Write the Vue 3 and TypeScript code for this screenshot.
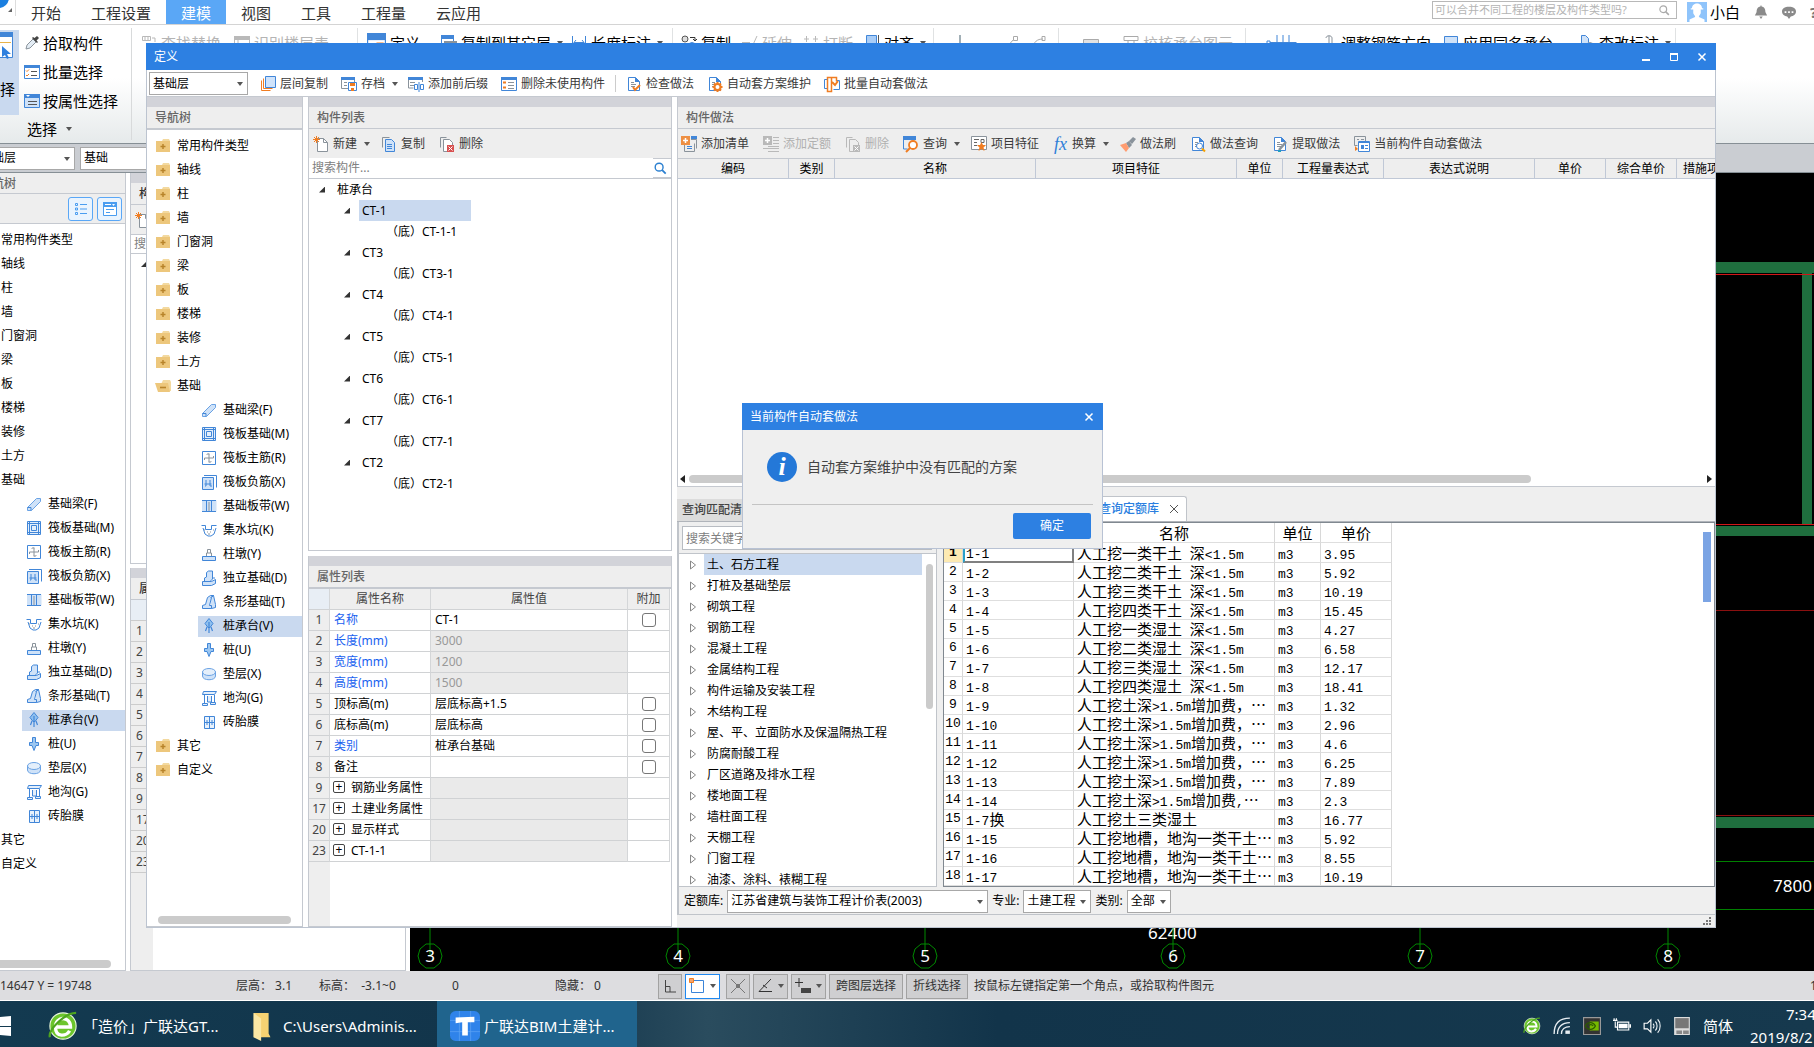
<script setup lang="ts">
import { h, ref } from 'vue'

const B = '#4186d8'
const L = '#cfe2f8'
const O = '#f07d22'
const G = '#8a939b'
const D = '#b9b9b9'

const line = (d: string, c = B, w = 1, f = 'none') =>
  `<path d="${d}" fill="${f}" stroke="${c}" stroke-width="${w}"/>`
const fill = (d: string, c = B) => `<path d="${d}" fill="${c}"/>`

const doc = line('M2.5 1.5h7l4 4v9h-11z', B, 1, '#fff') + fill('M9 1l5 5H9z') + line('M5 6.500h3M5 8.500h5M5 10.500h4', G)

const icons: Record<string, string> = {
  eyedrop: line('M2 14l1-4 6-6 3 3-6 6z', G, 1, '#e4edf5') + fill('M8 3l5 5 1-1-1.500-1.500L15 3 13 1l-2.500 2L9 2z', '#444'),
  batch: line('M.5 1.500h15v13H.5z', B, 1, '#fff') + fill('M0 1h16v3H0z') + line('M2 6.500l1 1 2-2M2 11l1 1 2-2', O) + line('M7 7.500h6M7 11.500h6', '#555'),
  attr: line('M.5 1.500h15v13H.5z', B, 1, L) + fill('M0 1h16v4H0z') + fill('M2 2h4L4 4z', '#fff') + line('M4 8.500h9M4 11.500h9', '#555'),
  find: line('M1.500 1.500h8v4h-8zM6.500 9.500h8v5h-8zM4 1v4M7 1v4M11 3h3v4', D),
  floors: fill('M0 1h16v4H0z', D) + line('M.5 1.500h15v13H.5zM4 5v9M6 8.500h8M6 11.500h8', D),
  define: line('M.5 .5h15v15H.5z', B, 1, '#fff') + fill('M0 0h16v6H0z') + line('M2 9h5M2 12h5', '#555') + fill('M8 8h6v6H8z', O),
  copyLayer: line('M.5 .5h12v9H.5z', B, 1, '#fff') + fill('M0 0h13v4H0z') + fill('M3 6h13v9H3z', G),
  dim: line('M1.500 1v14M14.500 1v14M3 7.500h10M5 5L3 7.500 5 10M11 5l2 2.500-2 2.500'),
  dup: `<circle cx="4" cy="4" r="3" fill="#ddd" stroke="#555"/><circle cx="11" cy="11" r="3.500" fill="${L}" stroke="${B}"/>` + line('M9 2.500h5v3M12 4l2 2 2-2M3 9v4h3', '#333'),
  extend: line('M0 7.500h8', D, 1) + line('M15 1L9 14M1 12h7', D),
  split: line('M1 4h5M3.500 1v6M10 4h5M12.500 1v6M1 12h5M10 12h5', D),
  align: line('M2.500 .5h10v8h-10z', B, 1, '#a9cdf7') + line('M14.500 0v16', '#555') + fill('M0 10h13v4H0z', G),
  vline: line('M8 0v16', '#44606e', 1),
  seg: line('M2 14L11 4', '#aaa') + line('M10.500 1.500h4v4h-4z', '#aaa'),
  arc: line('M3 12C4 7 7 4 13 4', '#aaa') + line('M12 1.500h3v4h-3zM1.500 10.500h3v3h-3z', '#aaa'),
  slab: line('M.5 4.500h15v8H.5z', '#aaa', 1, '#e2e2e2'),
  cap: line('M1 1.500h14v4H1zM5 5v9M11 5v9M3 14.500h10', '#aaa'),
  capB: line('M1.500 1.500h13v7h-13z', B, 1, L) + line('M5 9v5M11 9v5M1 11.500h14'),
  grid: line('M-6 7.500h28M-6 12.500h28M2.500 0v16M8.500 0v16M14.500 0v16') + line('M-7.500 6h3v3h-3z', B, 1, '#fff'),
  rebar: line('M5 3c0-3 6-3 6 0v10M8 1v13M4 9h9M5 12c0 3 6 3 6 0', G),
  edit: line('M2.500 .5h4l3 3v6h-7z', B, 1, L) + `<circle cx="11" cy="11" r="3.500" fill="#fff" stroke="${G}"/>`,
  layerCopy: line('M1.500 4.500v10h9', O) + line('M3.500 2.500v10h9', O) + line('M5.500 .5h10v11h-10z', B, 1, '#cfe3fb'),
  save: line('M.5 1.500h13v11H.5z', G, 1, '#fff') + fill('M0 1h14v3H0z', B) + line('M3 6.500h3M3 9.500h3', G) + line('M7.500 6.500h8v8h-8z', B, 1, '#fff') + fill('M9 7h5v3H9zM10 12h3v3h-3z', O),
  prefix: fill('M0 1h15v3H0z') + line('M.5 4v8h5M14.500 4v2M2 6.500h5M2 9.500h4', G) + line('M6.500 8.500h3v5h-3zM12.500 8.500h3v5h-3zM11 6v10'),
  unused: line('M.5 1.500h15v13H.5z', B, 1, '#fff') + fill('M0 1h16v3H0z') + line('M2 6.500h3M2 11.500h3', O, 2) + line('M7 6.500h6M7 9.500h6M7 12.500h6', G),
  check: doc + line('M7 11l2 3 5-5', O, 2),
  plan: doc + `<circle cx="10.500" cy="11" r="3" fill="#fff" stroke="${O}" stroke-width="2"/>` + line('M10.500 6v2M10.500 14v2M5.500 11h2M13.500 11h2M7 7.500l1.500 1.500M12.500 13l1.500 1.500M14 7.500L12.500 9M8.500 13L7 14.500', O, 2),
  batchAuto: line('M.5 3.500h3v9H.5zM12.500 4.500h3v9h-6', B) + line('M3.500 1.500h4v14h-4zM7.500 1.500h5v4', O, 1.5, '#fff') + line('M8 6l3 3 3-4', O, 2),
  newDoc: line('M4.500 2.500h6l4 4v9h-10z', G, 1, '#fff') + line('M10.500 2.500v4h4', G) + line('M1 1l5 5M6 1L1 6M3.500 0v7M0 3.500h7', O),
  copy: line('M1.500 11.500v-10h7', G) + line('M4.500 3.500h6l3 3v9h-9z', B, 1, L) + line('M6 8.500h5M6 10.500h5M6 12.500h5'),
  del: line('M1.500 11.500v-10h6', G) + line('M4.500 3.500h6l3 3v9h-9z', G, 1, '#fff') + fill('M8 9h7v7H8z', '#d85050') + line('M9.500 10.500l4 4M13.500 10.500l-4 4', '#fff'),
  delGray: line('M1.500 11.500v-10h6M4.500 3.500h6l3 3v9h-9z', D) + fill('M8 9h7v7H8z', D) + line('M9.500 10.500l4 4M13.500 10.500l-4 4', '#fff'),
  addList: line('M3.500 9v6.500h10v-8M10 3.500h5.500v9', G) + fill('M10 0h6v3h-6z', B) + line('M6 10.500h5M6 12.500h5', B) + fill('M0 0h9v9H0z', '#ee8f43') + line('M4.500 2v5M2 4.500h5', '#fff', 1.5),
  addQuota: fill('M0 0h9v9H0z', D) + line('M4.500 2v5M2 4.500h5', '#fff', 1.5) + line('M10 1.500h6M10 4.500h6M10 7.500h6M5 10.500h11M0 12.500h16M5 15.500h11', D),
  query: line('M.5 2v11h4', B) + fill('M0 0h13v4H0z') + `<circle cx="10" cy="9" r="4" fill="#fff" stroke="${O}" stroke-width="1.800"/>` + line('M7 12l-4 4', O, 2),
  feature: line('M.5 .5h15v13H.5z', G, 1, '#fff') + line('M3 3.500h5M3 6.500h3M3 9.500h3M10 3.500h3v3h-3z', '#666') + fill('M10.500 6l1.500 3h3l-2.500 2.500 1 3.500-3-2-3 2 1-3.500L6 9h3z', O),
  brush: fill('M9 5l4-4 3 2-4 5zM6 7l3-2 3 4-3 3z', G) + fill('M0 9l6-2 3 5-3 4z', '#ff9c70'),
  docQuery: doc + `<circle cx="9.500" cy="10" r="3" fill="#fff" stroke="${B}"/>` + line('M12 12.500l3 3', '#f5a000', 2),
  extract: doc + line('M7 14l7-8', G, 2.5) + line('M6 15h3', '#20a0c0', 2),
  currentAuto: line('M.5 .5h11v8M.5 .5v9h3M3 3.500h2M7 3.500h3', G) + line('M4.500 5.500h11v10h-11z', B, 1, '#fff') + line('M4 6.500h12') + fill('M7 9h3v4H7z') + line('M11 9.500h3M11 12.500h3') + fill('M1 10l3 3-3 2z', O),
  folder: fill('M8 1h6l1 2H7z', '#f3d99f') + fill('M1 3h14v11H1z', '#edc77c') + line('M8 6v5M5.500 8.500h5', '#b8842b', 1.5),
  folderOpen: fill('M8 2h7l1 2v9H3z', '#f3d99f') + fill('M0 5h13l2 9H3z', '#edc77c') + line('M5 9.500h6', '#b8842b', 1.6),
  beam: line('M1.500 11.500l9-9h4v3l-9 9h-4z', '#6aa2e4', 1, L) + line('M1.500 11.500h3.500v3', '#4186d8') ,
  raft: line('M1.500 1.500h13v13h-13zM5.500 5.500h5v5h-5zM1 3.500h14M1 12.500h14M3.500 1v14M12.500 1v14', B, 1, '#e4effb'),
  raftMain: line('M1.500 1.500h13v13h-13z', B, 1, '#fff') + line('M3.500 8h9M8 3.500v9M6 5c0-2 2-1.500 2-.5M10 11c0 2-2 1.500-2 .5M3.500 8v2M12.500 8V6', G),
  raftNeg: line('M1.500 3.500h11v12h-11z', B, 1, L) + line('M3 1.500h12.500v12', B) + line('M5 6v6M9 6v6M3.500 10h7M5 12H4M9 12h2', B),
  strip: line('M1 2.500h14v11H1', '#cfe2f8', 1, L) + line('M1 2.500h14M1 13.500h14M5.500 3v11M10.500 3v11', B) + line('M8 4v9', G),
  pit: line('M.5 3.500h4v4h6v-4h5', B) + line('M2 6l2 6 3 2h3l3-2 2-6', B) + line('M3 8h1M6 10h1M9 10h1M12 8h1M7 12h2', G),
  pier: line('M1.500 10.500h13v4h-13z', B, 1, L) + line('M5.500 10V7h5v3M6.500 7V3.500h3V7', G),
  single: line('M1.500 11.500h9l4-2v4l-4 2h-9zM3.500 11V8l2-1V2.500l2-1.500h4v8l-2 2M11 8h3', B, 1, L),
  stripF: line('M1.500 14.500v-3l3-1 2-7 3-2h3l-2 2-2 8h2v3zM9.500 3.500l3-2 2 9v3l-4 1', B, 1, L),
  capPile: line('M8 .5l4 5-3 4h-2l-3-4z', B, 1, '#8fc0ef') + line('M8 4v11M6 9l-1.500 4M10 9l1.500 4', B, 1.2),
  pile: line('M6.500 1.500h3v5h3v3h-2.500l-2 5-2-5H3.500v-3h3z', B, 1, '#9cc7f1'),
  cushion: `<path d="M1.500 6v4c0 5 13 5 13 0V6z" fill="${L}" stroke="#6aa2e4"/><ellipse cx="8" cy="6" rx="6.500" ry="3.500" fill="#e4effb" stroke="#6aa2e4"/>`,
  trench: line('M2.500 1.500h13l-2 3h-12zM3.500 5v8M13.500 5v8M1.500 13.500h5v2h-5zM9.500 12.500h5v2h-5zM6.500 6v6h4V6', B, 1, '#e4effb'),
  brick: line('M3.500 2.500h10v12h-10zM8.500 2v12M3 8.500h10M6 6v5M11 6v5', B, 1, '#e9f2fc'),
  search: `<circle cx="7" cy="7" r="4.500" fill="none" stroke="currentColor" stroke-width="1.600"/>` + line('M10.500 10.500l4 4', 'currentColor', 2),
  listView: line('M2.500 2.500h2v2h-2zM2.500 7h2v2h-2zM2.500 11.500h2v2h-2zM7 3.500h7M7 8h7M7 12.500h7', '#4a9df0'),
  formView: line('M1.500 1.500h13v13h-13z', '#4a9df0', 1, '#fff') + fill('M1 1h14v5H1z', '#4a9df0') + line('M3 3.500h6', '#fff') + fill('M10 3h3l-1.500 2z', '#fff') + line('M4 8.500h8M4 11.500h4', '#4a9df0'),
  selArea: line('M-4 .5H14.500v25H-4', B, 1, '#fff') + fill('M-4 0h19v5H-4z') + line('M-4 10.500H13', '#e8b34a', 1, 'none') + fill('M4 14v11l3-2 2 4 2-1-2-4h4z', '#2f80de'),
  ortho: line('M3.500 2v12H14M3.500 8.500H8V14', '#444'),
  rectSel: line('M2.500 2.500h12v12h-12z', '#3b84d8') + line('M.5 .5h4v4h-4z', O, 1, '#f5a56c'),
  cross: line('M1 1l14 14M15 1L1 15M6.500 6.500h3v3h-3z', '#777'),
  angle: line('M14 1L2 13.500h13M6 7l4 3', '#333'),
  plusBox: line('M4 0v9M0 4.500h8', '#333') + fill('M6 10h10v5H6z', '#444'),
  bell: fill('M8 0l1 2c3 0 4 3 4 6l2 4H1l2-4c0-3 1-6 4-6zM6 13h4l-2 3z', '#8a8a8a'),
  chat: fill('M8 2c5 0 8 2 8 5.500S13 13 10 13l-2 3-2-3C3 13 0 11 0 7.500S3 2 8 2z', '#8a8a8a') + fill('M3 7h2v2H3zM7 7h2v2H7zM11 7h2v2h-2z', '#fff'),
  avatar: fill('M0 0h16v16H0z', '#8fc4fb') + fill('M4 5c0-5 8-5 8 0h1v1h-2v3c-1 2-1.500 2-1.500 3L14 14v2H2v-2l4.500-2c0-1-.5-1-1.500-3V6H3V5z', '#fff'),
  browser: `<circle cx="8" cy="8" r="7" fill="#6cc52c" stroke="#e8f7dc" stroke-width=".6"/>` + line('M4 8.500h8c0-6-8-6-8 0s6 5 7.500 2', '#fff', 1.8) + line('M1 14C0 10 9 1 15 1', '#4da51f', 1.2),
  explorer: fill('M3 1h8v11l1 2H3z', '#f6d272') + fill('M3 1l4 3v12l-4-2z', '#fbe7a4'),
  glodon: `<rect width="16" height="16" rx="3" fill="#2f83ea"/>` + line('M0 5h16M0 11h16M5 0v16M11 0v16', '#5ba2f3', .4) + fill('M3 3.500l10-.5v3L9.500 6v7h-3V6L3 6.500z', '#fff'),
  winlogo: fill('M0 1l11-1v10H0zM0 11h11v9L0 19z', '#fff'),
  wifi: line('M1 15C1 6 6 1 15 1M4 15c0-6 4-10 11-10M7.500 15c0-4 3-6.500 7.500-6.500', '#e8eef2', 1.2) + fill('M11 12h4v3h-4z', '#e8eef2'),
  nvidia: fill('M0 0h16v16H0z', '#333') + line('M.5 .5h15v15H.5z', '#999') + fill('M6 4h8v8H6z', '#76b900') + line('M2 8c2-4 7-4 9 0-2 4-7 4-9 0zM5 8c1-1.500 3-1.500 4 0', '#2d5a00', 1.1),
  battery: line('M4 4.500h10v7H4z', '#fff') + fill('M5 6h8v4H5zM14.500 6.500H16v3h-1.500z', '#fff') + line('M0 3h4M1 1v2M3 1v2M2 4v5h2', '#fff'),
  volume: line('M1 5.500h3l3-3v11l-3-3H1z', '#fff') + line('M9 6c1 1 1 3 0 4M11 4c2 2 2 6 0 8M13 2c3 3 3 9 0 12', '#e8eef2'),
  touchpad: fill('M1 0h14v16H1z', '#ddd') + fill('M2 1h12v9H2z', '#777') + fill('M3 12h5v3H3zM9 12h5v3H9z', '#888'),
}

const Ico = (p: { n: string }) =>
  h('svg', { class: 'ico', viewBox: '0 0 16 16', 'aria-hidden': 'true', innerHTML: icons[p.n] })
Ico.props = ['n']

const tabs = ['开始', '工程设置', '建模', '视图', '工具', '工程量', '云应用']
const pickers = [
  { icon: 'eyedrop', text: '拾取构件' },
  { icon: 'batch', text: '批量选择' },
  { icon: 'attr', text: '按属性选择' },
]
type Tool = { icon: string; text?: string; off?: boolean; menu?: boolean; cls?: string }
const ribbon: { cls: string; tools: Tool[] }[] = [
  { cls: 'g-find', tools: [{ icon: 'find', text: '查找替换', off: true }, { icon: 'floors', text: '识别楼层表', off: true }] },
  { cls: 'g-define', tools: [{ icon: 'define', text: '定义', cls: 'big' }, { icon: 'copyLayer', text: '复制到其它层', menu: true }, { icon: 'dim', text: '长度标注', menu: true }] },
  { cls: 'g-modify', tools: [{ icon: 'dup', text: '复制' }, { icon: 'extend', text: '延伸', off: true }, { icon: 'split', text: '打断', off: true }, { icon: 'align', text: '对齐', menu: true }] },
  { cls: 'g-draw', tools: [{ icon: 'vline', cls: 'wide' }, { icon: 'seg' }, { icon: 'arc' }] },
  { cls: 'g-slab', tools: [{ icon: 'slab', cls: 'wide' }, { icon: 'cap', text: '校核承台图元', off: true }] },
  { cls: 'g-cap', tools: [{ icon: 'grid', cls: 'wide' }, { icon: 'rebar', text: '调整钢筋方向' }, { icon: 'capB', text: '应用同名承台', cls: 'spaced' }, { icon: 'edit', text: '查改标注', menu: true }] },
]
const groups = ['常用构件类型', '轴线', '柱', '墙', '门窗洞', '梁', '板', '楼梯', '装修', '土方']
const foundation = [
  ['beam', '基础梁(F)'], ['raft', '筏板基础(M)'], ['raftMain', '筏板主筋(R)'], ['raftNeg', '筏板负筋(X)'],
  ['strip', '基础板带(W)'], ['pit', '集水坑(K)'], ['pier', '柱墩(Y)'], ['single', '独立基础(D)'],
  ['stripF', '条形基础(T)'], ['capPile', '桩承台(V)'], ['pile', '桩(U)'], ['cushion', '垫层(X)'],
  ['trench', '地沟(G)'], ['brick', '砖胎膜'],
]
const nav = [
  ...groups.map(text => ({ text, icon: 'folder', child: false })),
  { text: '基础', icon: 'folderOpen', child: false },
  ...foundation.map(([icon, text]) => ({ text, icon, child: true })),
  { text: '其它', icon: 'folder', child: false },
  { text: '自定义', icon: 'folder', child: false },
]
const picked = ref('桩承台(V)')

const mainTools: Tool[] = [
  { icon: 'layerCopy', text: '层间复制' }, { icon: 'save', text: '存档', menu: true },
  { icon: 'prefix', text: '添加前后缀' }, { icon: 'unused', text: '删除未使用构件', cls: 'last' },
  { icon: 'check', text: '检查做法' }, { icon: 'plan', text: '自动套方案维护' }, { icon: 'batchAuto', text: '批量自动套做法' },
]
const partTools: Tool[] = [{ icon: 'newDoc', text: '新建', menu: true }, { icon: 'copy', text: '复制' }, { icon: 'del', text: '删除' }]
const methodTools: Tool[] = [
  { icon: 'addList', text: '添加清单' }, { icon: 'addQuota', text: '添加定额', off: true }, { icon: 'delGray', text: '删除', off: true },
  { icon: 'query', text: '查询', menu: true }, { icon: 'feature', text: '项目特征' }, { icon: 'fx', text: '换算', menu: true },
  { icon: 'brush', text: '做法刷' }, { icon: 'docQuery', text: '做法查询' }, { icon: 'extract', text: '提取做法' },
  { icon: 'currentAuto', text: '当前构件自动套做法' },
]
const parts = ['CT-1', 'CT3', 'CT4', 'CT5', 'CT6', 'CT7', 'CT2']

const props = [
  { n: 1, name: '名称', value: 'CT-1', blue: true, box: true },
  { n: 2, name: '长度(mm)', value: '3000', blue: true, lock: true },
  { n: 3, name: '宽度(mm)', value: '1200', blue: true, lock: true },
  { n: 4, name: '高度(mm)', value: '1500', blue: true, lock: true },
  { n: 5, name: '顶标高(m)', value: '层底标高+1.5', box: true },
  { n: 6, name: '底标高(m)', value: '层底标高', box: true },
  { n: 7, name: '类别', value: '桩承台基础', blue: true, box: true },
  { n: 8, name: '备注', value: '', box: true },
  { n: 9, name: '钢筋业务属性', value: '', lock: true, fold: true },
  { n: 17, name: '土建业务属性', value: '', lock: true, fold: true },
  { n: 20, name: '显示样式', value: '', lock: true, fold: true },
  { n: 23, name: 'CT-1-1', value: '', lock: true, fold: true },
]
const methodCols: [string, number][] = [
  ['编码', 111], ['类别', 46], ['名称', 201], ['项目特征', 201], ['单位', 46],
  ['工程量表达式', 101], ['表达式说明', 151], ['单价', 71], ['综合单价', 71], ['措施项目', 61],
]
const chapters = [
  '土、石方工程', '打桩及基础垫层', '砌筑工程', '钢筋工程', '混凝土工程', '金属结构工程', '构件运输及安装工程', '木结构工程',
  '屋、平、立面防水及保温隔热工程', '防腐耐酸工程', '厂区道路及排水工程', '楼地面工程', '墙柱面工程', '天棚工程', '门窗工程', '油漆、涂料、裱糊工程',
]
const quotas: [string, string, string][] = [
  ['1-1', '人工挖一类干土 深<1.5m', '3.95'], ['1-2', '人工挖二类干土 深<1.5m', '5.92'],
  ['1-3', '人工挖三类干土 深<1.5m', '10.19'], ['1-4', '人工挖四类干土 深<1.5m', '15.45'],
  ['1-5', '人工挖一类湿土 深<1.5m', '4.27'], ['1-6', '人工挖二类湿土 深<1.5m', '6.58'],
  ['1-7', '人工挖三类湿土 深<1.5m', '12.17'], ['1-8', '人工挖四类湿土 深<1.5m', '18.41'],
  ['1-9', '人工挖土深>1.5m增加费，…', '1.32'], ['1-10', '人工挖土深>1.5m增加费，…', '2.96'],
  ['1-11', '人工挖土深>1.5m增加费，…', '4.6'], ['1-12', '人工挖土深>1.5m增加费，…', '6.25'],
  ['1-13', '人工挖土深>1.5m增加费，…', '7.89'], ['1-14', '人工挖土深>1.5m增加费,…', '2.3'],
  ['1-7换', '人工挖土三类湿土', '16.77'], ['1-15', '人工挖地槽，地沟一类干土…', '5.92'],
  ['1-16', '人工挖地槽，地沟一类干土…', '8.55'], ['1-17', '人工挖地槽，地沟一类干土…', '10.19'],
]
/* Latin runs and Chinese runs of a cell take different faces */
const runs = (s: string) => s.match(/[\x20-\x7e]+|[^\x20-\x7e]+/g) ?? []
const isLatin = (s: string) => /^[\x20-\x7e]/.test(s)

const axes = [3, 4, 5, 6, 7, 8].map((n, i) => ({ n, x: 20 + Math.round(i * 247.6) }))
const octagon = (x: number) =>
  [[-4, -12], [4, -12], [10, -7], [12, 0], [10, 7], [4, 12], [-4, 12], [-10, 7], [-12, 0], [-10, -7]].map(([a, b]) => `${x + a},${783 + b}`).join(' ')
const showMsg = ref(true)
</script>

<template>
  <div class="app">
    <header class="menu">
      <span class="logo"></span>
      <nav class="tabs">
        <button v-for="t in tabs" :key="t" :class="{ on: t === '建模' }">{{ t }}</button>
      </nav>
      <label class="ask">
        <input type="text" aria-label="搜索帮助" placeholder="可以合并不同工程的楼层及构件类型吗?" />
        <Ico n="search" />
      </label>
      <div class="user">
        <Ico n="avatar" class="face" /><span>小白</span>
        <button aria-label="通知"><Ico n="bell" class="s14" /></button>
        <button aria-label="消息"><Ico n="chat" class="s14" /></button>
        <button class="help">?</button>
      </div>
    </header>

    <section class="ribbon">
      <div class="choose">
        <button class="select-big"><Ico n="selArea" /><span>择</span></button>
        <div class="pickers">
          <button v-for="p in pickers" :key="p.text"><Ico :n="p.icon" />{{ p.text }}</button>
          <button class="caption">选择<i class="arrow"></i></button>
        </div>
      </div>
      <div v-for="g in ribbon" :key="g.cls" class="group" :class="g.cls">
        <button v-for="t in g.tools" :key="t.icon" :class="[t.cls, { off: t.off }]">
          <Ico :n="t.icon" />{{ t.text }}<i v-if="t.menu" class="arrow"></i>
        </button>
      </div>
    </section>

    <section class="floorbar">
      <span class="combo floor-a"><select aria-label="楼层"><option>基础层</option></select></span>
      <span class="combo floor-b"><select aria-label="构件类型"><option>基础</option></select></span>
    </section>

    <main class="work">
      <aside class="back-nav">
        <h2>导航树</h2>
        <div class="views">
          <button aria-label="列表"><Ico n="listView" /></button>
          <button aria-label="图形"><Ico n="formView" /></button>
        </div>
        <ul class="nav">
          <li v-for="i in nav" :key="i.text" :class="{ child: i.child, on: i.text === picked }">
            <span><Ico v-if="i.child" :n="i.icon" />{{ i.text }}</span>
          </li>
        </ul>
        <div class="thumb"></div>
      </aside>
      <aside class="back-list">
        <div class="upper">
          <div class="band"></div>
          <h2>构件列表</h2>
          <div class="bar"><button><Ico n="newDoc" />新建</button></div>
          <div class="find">搜索构件...</div>
          <div class="root"><i class="open"></i></div>
        </div>
        <div class="lower">
          <div class="band"></div>
          <h2>属性列表</h2>
          <div class="nums">
            <span class="hd"></span>
            <span v-for="p in props" :key="p.n">{{ p.n }}</span>
          </div>
        </div>
      </aside>
      <div class="canvas">
        <svg width="100%" height="100%">
          <g fill="#1f6e3e">
            <rect x="1300" y="89" width="200" height="11" />
            <rect x="1392" y="100" width="10" height="252" />
            <rect x="1300" y="353" width="200" height="10" />
            <rect x="1300" y="644" width="200" height="11" />
          </g>
          <g stroke="#d01818">
            <path d="M1300 101.500h200M1300 351.500h200" />
            <path d="M1300 437.500h200M1300 642.500h200" stroke="#8a1010" />
          </g>
          <path d="M1300 688.500h200M1300 736.500h200" stroke="#008000" />
          <text x="1363" y="719" class="cad">7800</text>
          <text x="738" y="766" class="cad">62400</text>
          <g v-for="a in axes" :key="a.n">
            <path :d="`M${a.x} 740v43`" stroke="#008a00" />
            <polygon :points="octagon(a.x)" fill="#000" fill-opacity="0" stroke="#008a00" />
            <text :x="a.x" y="789" text-anchor="middle" class="cad">{{ a.n }}</text>
          </g>
        </svg>
      </div>
    </main>

    <footer class="status">
      <span class="c1">14647 Y = 19748</span>
      <span class="c2">层高： 3.1</span>
      <span class="c3">标高：&nbsp; -3.1~0</span>
      <span class="c4">0</span>
      <span class="c5">隐藏： 0</span>
      <div class="snap">
        <button aria-label="正交"><Ico n="ortho" /></button>
        <button aria-label="矩形" class="on"><Ico n="rectSel" /><i class="arrow"></i></button>
        <button aria-label="交点"><Ico n="cross" /></button>
        <button aria-label="角度"><Ico n="angle" /><i class="arrow"></i></button>
        <button aria-label="偏移"><Ico n="plusBox" /><i class="arrow"></i></button>
        <button>跨图层选择</button>
        <button>折线选择</button>
      </div>
      <span class="hint">按鼠标左键指定第一个角点，或拾取构件图元</span>
      <span class="fps">1</span>
    </footer>

    <footer class="taskbar">
      <button class="start" aria-label="开始"><svg viewBox="0 0 11 20" width="11" height="20" v-html="icons.winlogo"></svg></button>
      <button class="task t1"><Ico n="browser" />「造价」广联达GT...</button>
      <button class="task t2"><Ico n="explorer" />C:\Users\Adminis...</button>
      <button class="task t3"><Ico n="glodon" />广联达BIM土建计...</button>
      <div class="tray">
        <Ico n="browser" /><Ico n="wifi" /><Ico n="nvidia" /><Ico n="battery" /><Ico n="volume" /><Ico n="touchpad" />
        <span class="ime">简体</span>
        <div class="clock"><span>7:34</span><span>2019/8/2</span></div>
      </div>
    </footer>

    <section class="window" role="dialog" aria-label="定义">
      <div class="title">
        <span>定义</span>
        <button aria-label="最小化"><svg width="10" height="10"><path d="M1 8h8" stroke="#fff" stroke-width="2" /></svg></button>
        <button aria-label="最大化"><svg width="10" height="10"><path d="M1.500 1.500h7v7h-7z" fill="none" stroke="#fff" /><path d="M1 2h8" stroke="#fff" stroke-width="2" /></svg></button>
        <button aria-label="关闭"><svg width="10" height="10"><path d="M1.500 1.500l7 7M8.500 1.500l-7 7" stroke="#fff" stroke-width="1.500" /></svg></button>
      </div>
      <div class="toolbar">
        <span class="combo main-floor"><select aria-label="楼层"><option>基础层</option></select></span>
        <button v-for="t in mainTools" :key="t.text" :class="[t.cls, { menu: t.menu }]">
          <Ico :n="t.icon" />{{ t.text }}<i v-if="t.menu" class="arrow"></i>
        </button>
      </div>

      <div class="panes">
        <div class="pane pane-nav">
          <div class="band"></div>
          <h2>导航树</h2>
          <ul class="nav">
            <li v-for="i in nav" :key="i.text" :class="{ child: i.child, on: i.text === picked }" @click="i.child && (picked = i.text)">
              <span><Ico :n="i.icon" />{{ i.text }}</span>
            </li>
          </ul>
          <div class="thumb"></div>
        </div>

        <div class="column">
          <div class="pane pane-parts">
            <div class="band"></div>
            <h2>构件列表</h2>
            <div class="bar">
              <button v-for="t in partTools" :key="t.text" :class="{ menu: t.menu }">
                <Ico :n="t.icon" />{{ t.text }}<i v-if="t.menu" class="arrow"></i>
              </button>
            </div>
            <label class="find"><input type="text" aria-label="搜索构件" placeholder="搜索构件..." /><Ico n="search" /></label>
            <ul class="parts">
              <li class="l0"><i class="open"></i><span>桩承台</span></li>
              <template v-for="p in parts" :key="p">
                <li class="l1" :class="{ on: p === 'CT-1' }"><i class="open"></i><span>{{ p }}</span></li>
                <li class="l2">（底）{{ p }}-1</li>
              </template>
            </ul>
          </div>
          <div class="pane pane-props">
            <div class="band"></div>
            <h2>属性列表</h2>
            <table class="props">
              <colgroup><col class="k0" /><col class="k1" /><col /><col class="k3" /></colgroup>
              <thead><tr><th></th><th>属性名称</th><th>属性值</th><th>附加</th></tr></thead>
              <tbody>
                <tr v-for="p in props" :key="p.n">
                  <th>{{ p.n }}</th>
                  <td :class="{ blue: p.blue }"><button v-if="p.fold" class="plus" :aria-label="'展开' + p.name">+</button>{{ p.name }}</td>
                  <td :class="{ lock: p.lock }">{{ p.value }}</td>
                  <td class="mid"><input v-if="p.box" type="checkbox" :aria-label="'附加' + p.name" /></td>
                </tr>
              </tbody>
            </table>
            <div class="rest"></div>
          </div>
        </div>

        <div class="column wide-col">
          <div class="pane pane-method">
            <div class="band"></div>
            <h2>构件做法</h2>
            <div class="bar">
              <button v-for="t in methodTools" :key="t.text" :class="{ menu: t.menu, off: t.off }">
                <em v-if="t.icon === 'fx'">fx</em><Ico v-else :n="t.icon" />{{ t.text }}<i v-if="t.menu" class="arrow"></i>
              </button>
            </div>
            <div class="clip">
              <table class="method">
                <colgroup><col v-for="c in methodCols" :key="c[0]" :style="{ width: c[1] + 'px' }" /></colgroup>
                <thead><tr><th v-for="c in methodCols" :key="c[0]">{{ c[0] }}</th></tr></thead>
              </table>
            </div>
            <div class="hscroll"><i class="to-left"></i><span class="track"><b></b></span><i class="to-right"></i></div>
          </div>

          <div class="pane-query">
            <div class="qtabs">
              <button class="qtab">查询匹配清单</button>
              <button class="qtab on">查询定额库<svg width="10" height="10"><path d="M1 1l8 8M9 1l-8 8" stroke="#555" stroke-width="1" /></svg></button>
            </div>
            <div class="qbody">
              <div class="chap-col">
                <input type="text" aria-label="搜索关键字" placeholder="搜索关键字" />
                <div class="chap-box">
                  <ul>
                    <li v-for="(c, i) in chapters" :key="c" :class="{ on: i === 0 }">
                      <svg width="8" height="10"><path d="M1.500 1v8l5-4z" fill="#fff" stroke="#888" /></svg><span>{{ c }}</span>
                    </li>
                  </ul>
                  <b class="vthumb"></b>
                </div>
              </div>
              <div class="quota-box">
                <table class="quota">
                  <colgroup><col class="q0" /><col class="q1" /><col class="q2" /><col class="q3" /><col class="q4" /></colgroup>
                  <thead><tr><th></th><th>编码</th><th>名称</th><th>单位</th><th>单价</th></tr></thead>
                  <tbody>
                    <tr v-for="(q, i) in quotas" :key="q[0]" :class="{ on: i === 0 }">
                      <th>{{ i + 1 }}</th>
                      <td><span v-for="r in runs(q[0])" :key="r" :class="{ latin: isLatin(r) }">{{ r }}</span></td>
                      <td><span v-for="r in runs(q[1])" :key="r" :class="{ latin: isLatin(r) }">{{ r }}</span></td>
                      <td><span class="latin">m3</span></td>
                      <td><span class="latin">{{ q[2] }}</span></td>
                    </tr>
                  </tbody>
                </table>
                <b class="bluethumb"></b>
              </div>
            </div>
            <div class="filters">
              <label>定额库:<span class="combo lib"><select><option>江苏省建筑与装饰工程计价表(2003)</option></select></span></label>
              <label>专业:<span class="combo major"><select><option>土建工程</option></select></span></label>
              <label>类别:<span class="combo kind"><select><option>全部</option></select></span></label>
            </div>
            <div class="grip"><svg width="8" height="8" fill="#777"><path d="M6 0h2v2h-2zM3 3h2v2h-2zM6 3h2v2h-2zM0 6h2v2h-2zM3 6h2v2h-2zM6 6h2v2h-2z" /></svg></div>
          </div>
        </div>
      </div>
    </section>

    <section v-if="showMsg" class="msg" role="alertdialog" aria-label="当前构件自动套做法">
      <div class="title">
        <span>当前构件自动套做法</span>
        <button aria-label="关闭" @click="showMsg = false"><svg width="10" height="10"><path d="M1.500 1.500l7 7M8.500 1.500l-7 7" stroke="#fff" stroke-width="1.500" /></svg></button>
      </div>
      <div class="msg-body"><span class="info">i</span><p>自动套方案维护中没有匹配的方案</p></div>
      <div class="msg-foot"><button @click="showMsg = false">确定</button></div>
    </section>
  </div>
</template>

<style>
body { margin: 0; overflow: hidden; }
</style>

<style scoped>
.app {
  position: relative; display: flex; flex-direction: column; height: 100vh; overflow: hidden;
  font: 12px/20px "Noto Sans", "Noto Sans CJK SC", sans-serif; color: #000; background: #fff;
}
.app * { box-sizing: border-box; }
button, input, select { font: inherit; color: inherit; }
button { border: 0; padding: 0; background: none; white-space: nowrap; display: inline-flex; align-items: center; flex: none; }
input::placeholder { color: #808080; opacity: 1; }
h2, ul, p { margin: 0; padding: 0; list-style: none; }
.ico { width: 16px; height: 16px; flex: none; overflow: visible; }
.arrow { flex: none; width: 0; height: 0; border: 3px solid transparent; border-top: 4px solid #555; border-bottom: 0; margin-left: 6px; }
.open { flex: none; width: 6px; height: 6px; background: #333; clip-path: polygon(100% 0, 100% 100%, 0 100%); }
.combo { position: relative; display: inline-flex; height: 23px; border: 1px solid #a8a8a8; background: #fff; }
.combo select { flex: 1; min-width: 0; appearance: none; border: 0; background: none; padding: 0 0 0 3px; outline: 0; }
.combo::after { content: ""; position: absolute; right: 4px; top: 9px; border: 3px solid transparent; border-top: 4px solid #555; border-bottom: 0; pointer-events: none; }

/* top menu */
.menu { display: flex; align-items: center; height: 25px; flex: none; border-bottom: 1px solid #d4d4d4; }
.logo { position: relative; width: 16px; height: 16px; align-self: flex-start; border-right: 1px solid #ddd; overflow: hidden; }
.logo::before { content: ""; position: absolute; left: -12px; top: -13px; width: 21px; height: 21px; border-radius: 50%; background: #1b7fe0; }
.logo::after { content: ""; position: absolute; left: 8px; top: 8px; border-bottom: 4px solid #666; border-left: 4px solid transparent; }
.tabs { display: flex; flex: 1; align-self: flex-end; }
.tabs button { height: 24px; padding: 2px 15px 0; font-size: 15px; color: #333; }
.tabs .on { background: #5aa7f6; color: #fff; }
.ask { display: flex; align-items: center; width: 245px; height: 18px; margin-bottom: 5px; padding: 0 6px 0 2px; border: 1px solid #b8b8b8; color: #aaa; }
.ask input { flex: 1; min-width: 0; border: 0; outline: 0; padding: 0; font-size: 11px; line-height: 14px; }
.ask input::placeholder { color: #b4b4b4; }
.ask .ico { width: 12px; height: 12px; }
.user { display: flex; align-items: center; margin-left: 10px; font-size: 15px; }
.user .face { width: 20px; height: 20px; margin-right: 3px; }
.user .s14 { width: 14px; height: 14px; }
.user button { margin-left: 14px; }
.user .help { width: 4px; overflow: hidden; color: #777; font-weight: 700; }

/* ribbon */
.ribbon { display: flex; height: 119px; flex: none; border-bottom: 1px solid #868f95; background: linear-gradient(#fff 45%, #e6eaeb); font-size: 15px; }
.choose { display: flex; width: 132px; margin: 3px 0; border-right: 1px solid #d8dadb; }
.select-big { width: 19px; height: 85px; margin-top: 2px; padding-top: 2px; flex-direction: column; overflow: hidden; background: #c9d9ef; gap: 31px; align-items: flex-start; }
.select-big .ico { margin-left: -2px; }
.pickers { display: flex; flex-direction: column; padding-left: 5px; }
.pickers button { height: 29px; gap: 3px; }
.pickers .caption { height: 27px; padding-left: 3px; }
.group { display: flex; align-items: flex-start; margin: 3px 0; border-right: 1px solid #e0e2e3; }
.group button { height: 29px; gap: 4px; }
.group .arrow { margin-left: 2px; }
.group .off { color: #b4b4b4; }
.g-find { width: 226px; padding-left: 9px; gap: 13px; }
.g-define { width: 315px; padding-left: 9px; gap: 8px; }
.g-define .big { padding-right: 13px; }
.g-define .big .ico { width: 19px; height: 19px; }
.g-modify { width: 261px; padding-left: 8px; gap: 11px; }
.g-draw { width: 125px; padding-left: 10px; gap: 11px; }
.g-draw .wide { padding: 0 24px 0 8px; }
.g-slab { width: 187px; padding-left: 19px; gap: 19px; }
.g-slab .wide .ico { width: 26px; }
.g-cap { width: 430px; padding-left: 22px; gap: 12px; }
.g-cap .wide { padding-right: 12px; }
.g-cap .wide .ico { width: 29px; }
.g-cap .spaced { padding-right: 14px; }

.floorbar { display: flex; align-items: center; gap: 5px; height: 29px; flex: none; background: #cacdd2; border-bottom: 1px solid #868f95; }
.floor-a { width: 99px; margin-left: -24px; }
.floor-b { width: 120px; }

/* shared panel parts */
.band { height: 10px; flex: none; background: #d2d3d9; }
h2 { height: 22px; flex: none; padding-left: 8px; font-size: 12px; line-height: 21px; font-weight: 500; color: #666; background: #eee; border-bottom: 1px solid #c5c9d0; white-space: nowrap; overflow: hidden; }
.bar { display: flex; height: 30px; flex: none; background: #eee; border-bottom: 1px solid #c5c9d0; color: #3a3a3a; overflow: hidden; }
.bar button { gap: 4px; padding: 0 7px; }
.bar .menu { padding-right: 4px; height: auto; border: 0; }
.bar .arrow { margin-left: 3px; }
.bar .off { color: #b0b0b0; }
.bar em { width: 15px; font: italic 18px/20px "Liberation Serif", serif; color: #2f7fd8; }
.nav { flex: 1; overflow: hidden; padding-top: 4px; }
.nav li { display: flex; align-items: center; height: 24px; padding-left: 7px; }
.nav li span { display: flex; align-items: center; height: 21px; gap: 6px; }
.nav .child { padding-left: 51px; }
.nav .child span { flex: 1; padding-left: 3px; white-space: nowrap; }
.nav .on span { background: #c9d9ef; }
.thumb { height: 8px; border-radius: 4px; background: #cbcbcb; flex: none; }

/* main window behind */
.work { display: flex; flex: 1; min-height: 0; }
.back-nav { width: 126px; display: flex; flex-direction: column; border: 1px solid #c5c9d0; border-left: 0; border-top: 0; }
.back-nav h2 { height: 21px; text-indent: -28px; }
.views { display: flex; justify-content: flex-end; align-items: center; gap: 4px; height: 30px; flex: none; padding-right: 3px; background: #eee; border-bottom: 1px solid #c5c9d0; }
.views button { width: 25px; height: 24px; justify-content: center; border: 1px solid #5aa7f6; border-radius: 3px; background: #eaf4fe; }
.back-nav .nav li { padding-left: 1px; }
.back-nav .nav .child { padding-left: 22px; }
.back-nav .nav .child span { padding-left: 4px; }
.back-nav .thumb { width: 111px; margin-bottom: 2px; border-radius: 0 4px 4px 0; }
.back-list { width: 276px; margin: 0 4px; display: flex; flex-direction: column; gap: 4px; overflow: hidden; }
.upper, .lower { display: flex; flex-direction: column; border: 1px solid #c5c9d0; border-top: 0; }
.upper { height: 391px; }
.lower { flex: 1; }
.back-list h2 { color: #333; }
.back-list .bar button { padding-left: 4px; }
.back-list .find { height: 19px; padding-left: 3px; line-height: 18px; color: #808080; border-bottom: 1px solid #c5c9d0; }
.back-list .root { padding: 7px 10px; }
.root .open { display: block; }
.nums { flex: 1; width: 22px; background: #eee; display: flex; flex-direction: column; }
.nums span { height: 21px; line-height: 20px; padding-left: 5px; color: #444; border-bottom: 1px solid #ccc; }
.nums .hd { background: #e8eef5; }
.canvas { flex: 1; background: #000; overflow: hidden; }
.canvas svg { display: block; }
.cad { font: 17px "Noto Sans", sans-serif; fill: #fff; }

.status { display: flex; align-items: center; height: 30px; flex: none; padding-top: 1px; background: #dddde0; border-bottom: 1px solid #fff; color: #333; white-space: nowrap; }
.c1 { width: 236px; } .c2 { width: 83px; } .c3 { width: 133px; } .c4 { width: 103px; } .c5 { width: 103px; }
.snap { display: flex; gap: 3px; }
.snap button { height: 25px; padding: 0 3px; border: 1px solid #a2a2a2; background: #cfcfd1; }
.snap button:nth-last-child(-n+2) { padding: 0 6px; }
.snap .arrow { margin-left: 5px; }
.snap .on { border: 1px solid #1e88f0; background: #fff; margin-right: 3px; }
.hint { flex: 1; padding-left: 6px; }
.fps { width: 4px; overflow: hidden; }

.taskbar { display: flex; align-items: center; height: 46px; flex: none; background: linear-gradient(90deg, #133a50, #12344a 30%, #2a4c5e 39%, #12344a 55%, #16394e); color: #fff; font-size: 15px; }
.start { width: 41px; padding-top: 3px; }
.task { height: 46px; padding-top: 4px; overflow: hidden; }
.task .ico { width: 30px; height: 30px; }
.t1 { width: 204px; padding-left: 7px; gap: 5px; }
.t2 { width: 192px; padding-left: 3px; gap: 5px; }
.t3 { width: 200px; padding-left: 13px; gap: 4px; background: #20648d; }
.tray { display: flex; align-items: center; gap: 12px; margin-left: auto; padding-top: 3px; }
.tray .ico { width: 18px; height: 18px; }
.ime { margin-right: 5px; }
.clock { width: 64px; display: flex; flex-direction: column; line-height: 23px; overflow: hidden; white-space: nowrap; }
.clock span:first-child { padding-left: 36px; }

/* definition window */
.window { position: absolute; left: 146px; right: 98px; top: 43px; bottom: 119px; display: flex; flex-direction: column; background: #fff; border: 1px solid #bcc4d0; border-top: 0; }
.title { display: flex; align-items: center; height: 27px; flex: none; padding: 0 9px 0 8px; gap: 18px; background: #2d80e2; color: #fff; margin: 0 -1px; }
.title span { flex: 1; }
.toolbar { display: flex; align-items: center; height: 27px; flex: none; padding: 1px 0 0 2px; gap: 1px; border-bottom: 1px solid #c5c9d0; color: #3a3a3a; }
.main-floor { width: 99px; margin-right: 5px; color: #000; }
.toolbar button { height: 21px; padding: 0 6px; gap: 4px; border-radius: 3px; }
.toolbar button.menu { padding-right: 3px; border: 0; }
.toolbar .arrow { margin-left: 3px; }
.toolbar .last { margin-right: 8px; position: relative; }
.toolbar .last::after { content: ""; position: absolute; right: -5px; top: 2px; width: 1px; height: 17px; background: #ccc; }
.panes { display: flex; flex: 1; min-height: 0; gap: 5px; }
.pane { display: flex; flex-direction: column; border: 1px solid #c5c9d0; border-top: 0; min-height: 0; }
.pane-nav { width: 156px; border-left: 0; }
.pane-nav h2, .pane-props h2 { border-bottom-width: 2px; height: 23px; }
.pane-nav .nav li { padding-left: 8px; }
.pane-nav .nav .child { padding-left: 51px; }
.pane-nav .thumb { width: 133px; margin: 0 0 2px 11px; }
.column { display: flex; flex-direction: column; width: 364px; gap: 5px; }
.pane-parts { height: 454px; }
.pane-parts .bar button:first-child { padding-left: 4px; }
.find { display: flex; align-items: center; }
.pane-parts .find { height: 20px; flex: none; padding-right: 4px; border-bottom: 2px solid #c5c9d0; color: #2a7fd0; }
.find input { flex: 1; min-width: 0; border: 0; outline: 0; padding: 0 0 0 3px; }
.find .ico { width: 14px; height: 14px; }
.parts li { display: flex; align-items: center; height: 21px; }
.l0 { padding-left: 10px; gap: 12px; }
.l1 { padding-left: 35px; gap: 9px; }
.l1 span { width: 112px; padding-left: 3px; line-height: 21px; }
.l1.on span { background: #c9d9ef; }
.l2 { padding-left: 77px; }
.pane-props { flex: 1; }
table { border-spacing: 0; table-layout: fixed; }
.props { width: 100%; flex: none; padding-right: 1px; }
.k0 { width: 21px; } .k1 { width: 101px; } .k3 { width: 42px; }
.props th, .props td { height: 21px; padding: 0 0 0 4px; line-height: 18px; font-weight: 400; text-align: left; border-right: 1px solid #d4d6d8; border-bottom: 1px solid #d0d2d4; white-space: nowrap; }
.props th { padding: 0; text-align: center; background: #eee; color: #444; }
.props thead th:first-child { background: #e8eef5; }
.props .blue { color: #1a62f0; }
.props .lock { background: #eaeaea; color: #999; }
.props .mid { padding: 0; text-align: center; }
.props input { appearance: none; display: block; width: 14px; height: 14px; margin: 0 auto 1px; border: 1px solid #777; border-radius: 3px; background: #fff; }
.plus { width: 12px; height: 12px; justify-content: center; margin: 0 6px 0 -1px; border: 1px solid #444; border-radius: 2px; line-height: 10px; vertical-align: 1px; }
.rest { flex: 1; width: 21px; background: #eee; }

.wide-col { flex: 1; width: auto; min-width: 0; gap: 0; }
.pane-method { height: 390px; border-right: 0; }
.pane-method .bar button:first-child { padding-left: 3px; }
.clip { flex: 1; overflow: hidden; }
.method { width: 1060px; }
.method th { height: 20px; padding: 1px 0 0; line-height: 18px; font-weight: 400; background: #eee; border-right: 1px solid #c0c8d6; border-bottom: 1px solid #c0c8d6; white-space: nowrap; }
.hscroll { display: flex; align-items: center; gap: 4px; height: 8px; margin: 0 3px 3px 2px; }
.track { flex: 1; }
.track b { display: block; width: 83%; height: 8px; border-radius: 4px; background: #cbcbcb; }
.to-left, .to-right { border: 4px solid transparent; border-right: 5px solid #222; border-left: 0; }
.to-right { border-left: 5px solid #222; border-right: 0; }

.pane-query { flex: 1; display: flex; flex-direction: column; min-height: 0; background: #efefef; }
.qtabs { display: flex; align-items: flex-end; height: 35px; flex: none; border-bottom: 1px solid #b0b4ba; }
.qtab { height: 22px; width: 408px; padding-left: 5px; font-weight: 500; background: #dcdcdc; color: #444; }
.qtab.on { width: 102px; height: 25px; padding-left: 13px; gap: 10px; background: #fff; color: #2b7fe0; border: 1px solid #c0c4ca; border-bottom: 0; border-radius: 0 3px 0 0; }
.qbody { display: flex; flex: 1; min-height: 0; gap: 6px; }
.chap-col { display: flex; flex-direction: column; width: 260px; border: 1px solid #c0c4ca; border-width: 0 1px 0 2px; }
.chap-col input { height: 24px; margin: 4px 4px 3px 3px; flex: none; border: 1px solid #b8bcc2; padding: 0 3px; background: #fff; }
.chap-box { flex: 1; display: flex; align-items: flex-start; overflow: hidden; background: #fff; border: 1px solid #c0c4ca; border-width: 1px 0; }
.chap-box ul { flex: 1; min-width: 0; }
.chap-box li { display: flex; align-items: center; height: 21px; padding-left: 10px; gap: 7px; }
.chap-box li span { flex: 1; padding-left: 3px; line-height: 21px; white-space: nowrap; }
.chap-box .on span { background: #c9d9ef; }
.vthumb { width: 7px; height: 145px; margin: 10px 3px 0 4px; border-radius: 4px; background: #cbcbcb; }
.quota-box { flex: 1; display: flex; justify-content: space-between; align-items: flex-start; min-width: 0; overflow: hidden; background: #fff; border: 1px solid #808890; }
.quota { flex: none; width: 448px; font-family: "Noto Sans CJK SC", sans-serif; font-size: 15px; }
.q0 { width: 19px; } .q1 { width: 111px; } .q2 { width: 201px; } .q3 { width: 46px; } .q4 { width: 71px; }
.quota th, .quota td { height: 19px; padding: 0 0 0 3px; line-height: 18px; font-weight: 400; text-align: left; white-space: pre; overflow: hidden; border-right: 1px solid #d8d8d8; border-bottom: 1px solid #dedede; }
.quota thead th { height: 20px; padding: 0; text-align: center; line-height: 19px; }
.quota tbody th { padding: 0; text-align: center; font: 13px/18px "Liberation Mono", monospace; }
.quota .latin { font: 13px/12px "Liberation Mono", monospace; }
.quota .on th { background: #fdeab2; font-weight: 700; }
.quota .on td:nth-child(2) { border-right: 2px solid #808080; border-bottom: 2px solid #808080; border-left: 2px solid #2ba0c8; padding-left: 1px; line-height: 17px; }
.bluethumb { width: 8px; height: 70px; margin: 9px 3px 0 0; background: #7ba4e4; }
.filters { display: flex; align-items: center; height: 28px; flex: none; padding: 1px 0 0 5px; gap: 4px; border-bottom: 1px solid #c0c4ca; border-left: 2px solid #c0c4ca; }
.filters label { display: flex; align-items: center; gap: 4px; }
.lib { width: 261px; } .major { width: 68px; } .kind { width: 44px; }
.grip { display: flex; justify-content: flex-end; height: 12px; flex: none; padding: 2px 4px; }

/* message */
.msg { position: absolute; left: 742px; top: 403px; width: 361px; background: #efefef; border: 1px solid #b8c2d4; border-top: 0; }
.msg-body { display: flex; align-items: center; gap: 10px; height: 75px; margin: 0 9px; padding-left: 15px; border-bottom: 1px solid #c4c4c4; font-size: 14px; color: #444; }
.info { width: 30px; height: 30px; border-radius: 50%; background: #2478d8; color: #fff; font: italic bold 26px/30px "Liberation Serif", serif; text-align: center; }
.msg-foot { display: flex; justify-content: flex-end; padding: 8px 11px 9px; }
.msg-foot button { width: 78px; height: 26px; justify-content: center; border-radius: 2px; background: #2d80e2; color: #fff; }
</style>
